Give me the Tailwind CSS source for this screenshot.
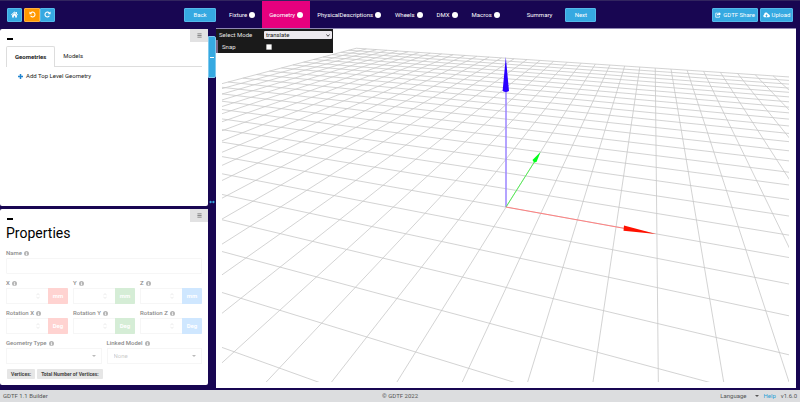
<!DOCTYPE html>
<html lang="en">
<head>
<meta charset="utf-8">
<title>GDTF Builder</title>
<script src="https://cdn.jsdelivr.net/npm/@tailwindcss/browser@4"></script>
</head>
<body class="flex flex-col h-screen overflow-hidden bg-[#180652] font-[Roboto,sans-serif] text-[6px] leading-[10px] text-[#222]">

<svg class="hidden">
  <symbol id="info" viewBox="0 0 16 16"><circle cx="8" cy="8" r="8" fill="currentColor"/><path d="M6.5 7h2.8v4.6h1.2v1.6H5.8v-1.6h1V8.6h-.9V7zM6.7 3h2.4v2.5H6.7z" fill="#fff"/></symbol>
  <symbol id="spin" viewBox="0 0 8 12"><path d="M1 4.5 4 1l3 3.500M1 7.500 4 11l3-3.500" fill="none" stroke="currentColor" stroke-width="1.500"/></symbol>
  <symbol id="bars" viewBox="0 0 12 12"><path d="M1 2h10M1 6h10M1 10h10" stroke="currentColor" stroke-width="2" fill="none"/></symbol>
  <symbol id="turn" viewBox="0 0 16 16"><path d="M3.500 5.200A5.500 5.500 0 1 1 3.600 11" fill="none" stroke="currentColor" stroke-width="2.400"/><path d="M1 1v6.500h6.500z" fill="currentColor"/></symbol>
</svg>

<header class="flex items-stretch h-7 shrink-0 border-t border-[#32255f] text-white">
  <div class="flex items-center justify-between w-[27%] pl-[7px]">
    <div class="flex">
      <button aria-label="Home" class="flex items-center justify-center w-[15px] h-[14px] mr-[2px] rounded-[1px] bg-[#36a9e1] border border-[#55b9ea]"><svg class="w-[7px] h-[7px]" viewBox="0 0 16 16" fill="currentColor"><path d="M8 1 0 8.300l1.200 1.200L8 3.400l6.800 6.100L16 8.300l-2.500-2.300V2h-2.300v2zM8 4.800 2.500 9.700V15h4v-4h3v4h4V9.700z"/></svg></button>
      <button aria-label="Undo" class="flex items-center justify-center w-[16px] h-[14px] rounded-l-[1px] bg-[#ff9800] border border-[#ffb040]"><svg class="w-[7px] h-[7px]"><use href="#turn"/></svg></button>
      <button aria-label="Redo" class="flex items-center justify-center w-[15px] h-[14px] rounded-r-[1px] bg-[#36a9e1] border border-[#55b9ea]"><svg class="w-[7px] h-[7px] -scale-x-100"><use href="#turn"/></svg></button>
    </div>
    <button class="w-8 h-[14px] rounded-[1px] bg-[#36a9e1] border border-[#55b9ea] leading-none">Back</button>
  </div>
  <nav class="flex">
    <a href="#" class="flex items-center gap-[2px] pl-[13px] pr-[7px]">Fixture <i class="size-[6px] rounded-full bg-white"></i></a>
    <a href="#" class="flex items-center gap-[2px] px-[7px] bg-[#e6007e]">Geometry <i class="size-[6px] rounded-full bg-white"></i></a>
    <a href="#" class="flex items-center gap-[2px] px-[7px]">PhysicalDescriptions <i class="size-[6px] rounded-full bg-white"></i></a>
    <a href="#" class="flex items-center gap-[2px] px-[7px]">Wheels <i class="size-[6px] rounded-full bg-white"></i></a>
    <a href="#" class="flex items-center gap-[2px] px-[7px]">DMX <i class="size-[6px] rounded-full bg-white"></i></a>
    <a href="#" class="flex items-center gap-[2px] px-[7px]">Macros <i class="size-[6px] rounded-full bg-white"></i></a>
    <a href="#" class="flex items-center pl-[20px] pr-[13px]">Summary</a>
  </nav>
  <button class="self-center w-[31px] h-[14px] rounded-[1px] bg-[#36a9e1] border border-[#55b9ea] leading-none">Next</button>
  <div class="flex items-center gap-[2px] ml-auto pr-[7px]">
    <button class="flex items-center justify-center gap-[2px] w-[46px] h-[14px] rounded-[1px] bg-[#36a9e1] border border-[#55b9ea] leading-none"><svg class="w-[6px] h-[6px]" viewBox="0 0 16 16"><path d="M7 3H2v11h10v-3" fill="none" stroke="currentColor" stroke-width="2"/><path d="M10 0l6 5-6 5V7C7 7 6 8 5.500 10.500 4 6 6 3 10 3z" fill="currentColor"/></svg>GDTF Share</button>
    <button class="flex items-center justify-center gap-[2px] w-[33px] h-[14px] rounded-[1px] bg-[#36a9e1] border border-[#55b9ea] leading-none"><svg class="w-[7px] h-[6px]" viewBox="0 0 18 14"><path d="M4 13a4 4 0 0 1-1-7.500A5 5 0 0 1 12.500 3.500 4 4 0 0 1 15 6a3.600 3.600 0 0 1 0 7z" fill="currentColor"/><path d="M9 5l3.500 3.800H10V12H8V8.800H5.500z" fill="#36a9e1"/></svg>Upload</button>
  </div>
</header>

<main class="flex flex-1 min-h-0">
  <div class="flex flex-col w-[26%] pt-px pb-[5px] gap-[3px]">
    <section class="relative flex-1 min-h-0 px-[6px] rounded-[2px] bg-white">
      <button aria-label="Panel menu" class="absolute right-0 top-0 flex items-center justify-center w-[18px] h-[13px] bg-[#e2e2e3] text-[#777]"><svg class="w-[5px] h-[5px]"><use href="#bars"/></svg></button>
      <button aria-label="Collapse" class="flex items-start h-[17px] pt-[9px] pl-[1px]"><i class="w-[6px] h-[2px] bg-black"></i></button>
      <div role="tablist" class="flex border-b border-[#ddd]">
        <button role="tab" class="h-[21px] px-2 -mb-px rounded-t-[2px] border border-b-0 border-[#ddd] bg-white font-bold">Geometries</button>
        <button role="tab" class="px-2">Models</button>
      </div>
      <button class="flex items-center gap-[3px] mt-[4px] ml-[12px]"><svg class="w-[5px] h-[5px]" viewBox="0 0 10 10"><path d="M5 0v10M0 5h10" stroke="#2185d0" stroke-width="3"/></svg>Add Top Level Geometry</button>
    </section>

    <section class="relative px-[6px] pb-[6px] rounded-[2px] bg-white">
      <button aria-label="Panel menu" class="absolute right-0 top-0 flex items-center justify-center w-[18px] h-[13px] bg-[#e2e2e3] text-[#777]"><svg class="w-[5px] h-[5px]"><use href="#bars"/></svg></button>
      <button aria-label="Collapse" class="flex items-start h-[15px] pt-[9px] pl-[1px]"><i class="w-[6px] h-[2px] bg-black"></i></button>
      <h1 class="text-[14px] leading-[18px] text-black">Properties</h1>
      <form class="grid grid-cols-6 gap-x-[5px] gap-y-[4px] mt-[6px] font-medium text-[#8b8b8b]">
        <div class="col-span-6">
          <label for="name" class="flex items-center gap-[2px]">Name <svg class="size-[5px] text-[#b5b5b5]"><use href="#info"/></svg></label>
          <input id="name" disabled class="block w-full h-[16px] border border-[#f6f6f6] rounded-[1px]">
        </div>
        <div class="col-span-2">
          <label for="px" class="flex items-center gap-[2px]">X <svg class="size-[5px] text-[#b5b5b5]"><use href="#info"/></svg></label>
          <div class="flex items-center h-[16px] border border-r-0 border-[#f6f6f6]"><input id="px" disabled class="flex-1 min-w-0"><svg class="w-[4px] h-[6px] mr-2 text-[#e6e6e6]"><use href="#spin"/></svg><span class="flex items-center justify-center w-[20px] h-[16px] rounded-r-[1px] bg-[#ffd3d1] text-white font-bold">mm</span></div>
        </div>
        <div class="col-span-2">
          <label for="py" class="flex items-center gap-[2px]">Y <svg class="size-[5px] text-[#b5b5b5]"><use href="#info"/></svg></label>
          <div class="flex items-center h-[16px] border border-r-0 border-[#f6f6f6]"><input id="py" disabled class="flex-1 min-w-0"><svg class="w-[4px] h-[6px] mr-2 text-[#e6e6e6]"><use href="#spin"/></svg><span class="flex items-center justify-center w-[20px] h-[16px] rounded-r-[1px] bg-[#d5edd6] text-white font-bold">mm</span></div>
        </div>
        <div class="col-span-2">
          <label for="pz" class="flex items-center gap-[2px]">Z <svg class="size-[5px] text-[#b5b5b5]"><use href="#info"/></svg></label>
          <div class="flex items-center h-[16px] border border-r-0 border-[#f6f6f6]"><input id="pz" disabled class="flex-1 min-w-0"><svg class="w-[4px] h-[6px] mr-2 text-[#e6e6e6]"><use href="#spin"/></svg><span class="flex items-center justify-center w-[20px] h-[16px] rounded-r-[1px] bg-[#cfe7ff] text-white font-bold">mm</span></div>
        </div>
        <div class="col-span-2">
          <label for="rx" class="flex items-center gap-[2px]">Rotation X <svg class="size-[5px] text-[#b5b5b5]"><use href="#info"/></svg></label>
          <div class="flex items-center h-[16px] border border-r-0 border-[#f6f6f6]"><input id="rx" disabled class="flex-1 min-w-0"><svg class="w-[4px] h-[6px] mr-2 text-[#e6e6e6]"><use href="#spin"/></svg><span class="flex items-center justify-center w-[20px] h-[16px] rounded-r-[1px] bg-[#ffd3d1] text-white font-bold">Deg</span></div>
        </div>
        <div class="col-span-2">
          <label for="ry" class="flex items-center gap-[2px]">Rotation Y <svg class="size-[5px] text-[#b5b5b5]"><use href="#info"/></svg></label>
          <div class="flex items-center h-[16px] border border-r-0 border-[#f6f6f6]"><input id="ry" disabled class="flex-1 min-w-0"><svg class="w-[4px] h-[6px] mr-2 text-[#e6e6e6]"><use href="#spin"/></svg><span class="flex items-center justify-center w-[20px] h-[16px] rounded-r-[1px] bg-[#d5edd6] text-white font-bold">Deg</span></div>
        </div>
        <div class="col-span-2">
          <label for="rz" class="flex items-center gap-[2px]">Rotation Z <svg class="size-[5px] text-[#b5b5b5]"><use href="#info"/></svg></label>
          <div class="flex items-center h-[16px] border border-r-0 border-[#f6f6f6]"><input id="rz" disabled class="flex-1 min-w-0"><svg class="w-[4px] h-[6px] mr-2 text-[#e6e6e6]"><use href="#spin"/></svg><span class="flex items-center justify-center w-[20px] h-[16px] rounded-r-[1px] bg-[#cfe7ff] text-white font-bold">Deg</span></div>
        </div>
        <div class="col-span-3">
          <label for="gtype" class="flex items-center gap-[2px]">Geometry Type <svg class="size-[5px] text-[#b5b5b5]"><use href="#info"/></svg></label>
          <div class="relative"><select id="gtype" disabled class="block appearance-none w-full h-[16px] px-[6px] border border-[#f6f6f6] opacity-100"><option></option></select><i class="absolute right-[6px] top-[7px] border-x-2 border-t-2 border-x-transparent border-t-[#bbb]"></i></div>
        </div>
        <div class="col-span-3">
          <label for="linked" class="flex items-center gap-[2px]">Linked Model <svg class="size-[5px] text-[#b5b5b5]"><use href="#info"/></svg></label>
          <div class="relative"><select id="linked" disabled class="block appearance-none w-full h-[16px] px-[6px] border border-[#f6f6f6] font-normal text-[#ccc] opacity-100"><option>None</option></select><i class="absolute right-[6px] top-[7px] border-x-2 border-t-2 border-x-transparent border-t-[#bbb]"></i></div>
        </div>
      </form>
      <div class="flex gap-[2px] mt-[5px] pl-[1px] text-[5px] font-bold text-[#444]">
        <span class="px-1 rounded-[1px] bg-[#e6e6e6]">Vertices:</span>
        <span class="px-1 rounded-[1px] bg-[#e6e6e6]">Total Number of Vertices:</span>
      </div>
    </section>
  </div>

  <div class="flex flex-col items-center w-[1%] pt-2">
    <button aria-label="Collapse sidebar" class="flex items-center justify-center w-full h-[42px] rounded-r-[2px] border border-[#7fc9ee] bg-[#36a9e1]"><i class="w-1 h-px bg-white"></i></button>
    <svg class="w-[6px] h-[4px] mt-[122px]" viewBox="0 0 12 8"><path d="M0 4l4-3v2h4V1l4 3-4 3V5H4v2z" fill="#36a9e1"/></svg>
  </div>

  <section class="relative flex-1 mr-1 mb-[2px] bg-white border-t border-[#8f87b3]">
    <svg class="block w-full h-full pl-[6px] pr-[7px] pb-[6px]" viewBox="222 29 567 353" preserveAspectRatio="xMidYMid slice" aria-label="3D view">
      <g id="grid" fill="none" stroke="#c8c8c8" stroke-width="0.800"></g>
      <path d="M506 207 V90" stroke="#9b85ff" stroke-width="1.500"/>
      <path d="M505.800 57 L509 91 Q505.800 93 502.600 91 Z" fill="#2a00ff"/>
      <path d="M506 207 L535 161" stroke="#55f055" stroke-width="1"/>
      <path d="M540.500 152 L536.500 162 L534 162.500 L532.500 160 Z" fill="#00ff1a"/>
      <path d="M506 207 L625 228.500" stroke="#ff8080" stroke-width="1"/>
      <path d="M656 234 L623.500 230.800 L624 225.500 Z" fill="#ff1100"/>
    </svg>
    <div class="absolute left-0 top-0 w-[117px] bg-[#1a1a1a] text-[#e6e6e6]">
      <div class="flex items-center h-[11px] pl-[3px] pr-[1px]">
        <label for="mode" class="w-[45px]">Select Mode</label>
        <div class="relative flex-1"><select id="mode" class="block appearance-none w-full h-[8px] pl-[2px] rounded-[1px] bg-[#ece9ee] text-[#222] leading-[8px]"><option>translate</option></select><svg class="absolute right-[2px] top-[3px] w-[4px] h-[3px]" viewBox="0 0 8 6"><path d="M1 1l3 3.500L7 1" fill="none" stroke="#222" stroke-width="1.600"/></svg></div>
      </div>
      <div class="flex items-center h-[13px] pl-1 border-l-2 border-[#806787]">
        <label for="snap" class="w-[43px]">Snap</label>
        <input id="snap" type="checkbox" class="appearance-none size-[6px] ml-px rounded-[1px] border border-[#aaa] bg-white">
      </div>
    </div>
  </section>
</main>

<footer class="flex items-center h-[12px] shrink-0 px-[3px] bg-[#dcdddf] text-[#555]">
  <span class="flex-1">GDTF 1.1 Builder</span>
  <span>© GDTF 2022</span>
  <div class="flex flex-1 justify-end items-center gap-[5px]">
    <button class="flex items-center gap-2">Language <i class="border-x-2 border-t-2 border-x-transparent border-t-[#555]"></i></button>
    <a href="#" class="text-[#2a9fd6]">Help</a>
    <span>v1.6.0</span>
  </div>
</footer>

<script>
  // Perspective floor grid: 40 x 40 cells around the origin.
  const HORIZON = -30.3, VX = 654.3, N = 20, NEAR = 2;
  const depth = (i, j) => 6.242 + 0.473 * j - 0.1585 * i;
  const point = (i, j) => {
    const h = 1482.3 / depth(i, j);
    return (VX + h * (0.1585 * i - 0.6242)).toFixed(2) + ' ' + (HORIZON + h).toFixed(2);
  };
  let d = '';
  for (let n = -N; n <= N; n++) {
    const jNear = Math.max(-N, (NEAR - 6.242 + 0.1585 * n) / 0.473);
    d += `M${point(n, N)}L${point(n, jNear)}`;
    if (depth(-N, n) > NEAR) {
      const iNear = Math.min(N, (6.242 + 0.473 * n - NEAR) / 0.1585);
      d += `M${point(-N, n)}L${point(iNear, n)}`;
    }
  }
  const path = document.createElementNS('http://www.w3.org/2000/svg', 'path');
  path.setAttribute('d', d);
  document.getElementById('grid').appendChild(path);
</script>
</body>
</html>
